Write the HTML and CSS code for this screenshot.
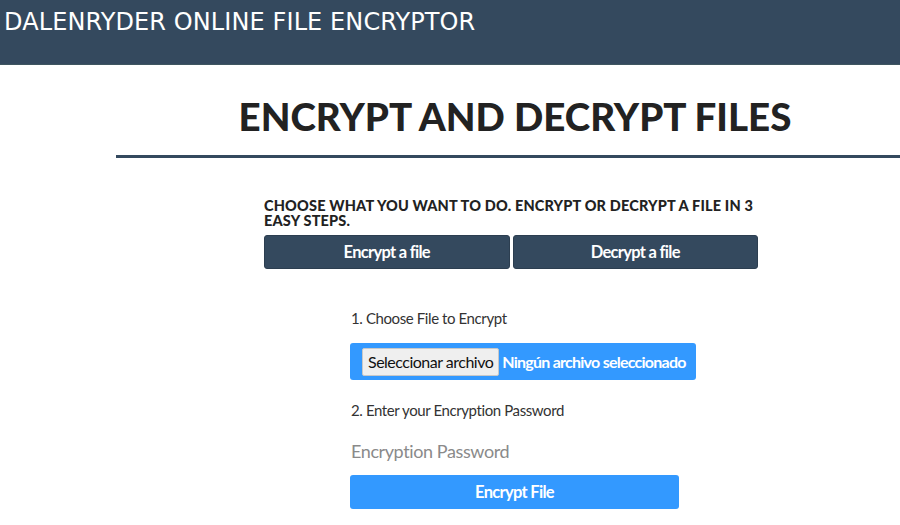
FILE: index.html
```html
<!DOCTYPE html>
<html lang="es">
<head>
<meta charset="utf-8">
<title>Dalenryder Online File Encryptor</title>
<link rel="stylesheet" href="styles.css">
</head>
<body>
<header class="topbar">
  <div class="brand">DALENRYDER ONLINE FILE ENCRYPTOR</div>
</header>
<main class="page">
  <h1 class="title">ENCRYPT AND DECRYPT FILES</h1>
  <hr class="rule">
  <section class="panel">
    <p class="lead">CHOOSE WHAT YOU WANT TO DO. ENCRYPT OR DECRYPT A FILE IN 3 EASY STEPS.</p>
    <div class="tabs">
      <button class="tab" type="button">Encrypt a file</button>
      <button class="tab" type="button">Decrypt a file</button>
    </div>
    <form class="steps">
      <label class="step-label">1. Choose File to Encrypt</label>
      <div class="filebox">
        <span class="filebtn">Seleccionar archivo</span>
        <span class="filename">Ningún archivo seleccionado</span>
      </div>
      <label class="step-label">2. Enter your Encryption Password</label>
      <input class="password" type="password" placeholder="Encryption Password">
      <button class="submit" type="button">Encrypt File</button>
    </form>
  </section>
</main>
</body>
</html>
```
FILE: styles.css
```css
html, body {
  margin: 0;
  padding: 0;
  background: #ffffff;
}
body {
  font-family: "Lato", "Liberation Sans", sans-serif;
  color: #333333;
  overflow: hidden;
}
.topbar {
  height: 65px;
  background: #34495e;
  border-bottom: 1px solid #3f5660;
  padding: 8px 0 0 4px;
  box-sizing: border-box;
}
.brand {
  font-family: "DejaVu Sans", sans-serif;
  font-size: 24px;
  line-height: 28px;
  color: #ffffff;
  letter-spacing: 0.1px;
}
.page {
  margin-left: 116px;
}
.title {
  margin: 0;
  padding: 28px 0 0 14px;
  text-align: center;
  font-family: "Lato", sans-serif;
  font-weight: 900;
  font-size: 38.5px;
  line-height: 46px;
  color: #222222;
}
.rule {
  margin: 16px 0 0 0;
  border: 0;
  height: 3px;
  background: #34495e;
}
.panel {
  margin: 40px 0 0 148px;
  width: 494px;
}
.lead {
  margin: 0;
  font-family: "Lato", sans-serif;
  font-weight: 900;
  font-size: 14.5px;
  line-height: 15px;
  letter-spacing: 0.17px;
  color: #222222;
}
.tabs {
  margin-top: 7px;
  display: grid;
  grid-template-columns: 1fr 1fr;
  gap: 3px;
}
.tab {
  height: 34px;
  background: #34495e;
  border: 1px solid #2c3e50;
  border-radius: 3px;
  color: #ffffff;
  font-family: "Lato", sans-serif;
  font-weight: 700;
  font-size: 16.5px;
  letter-spacing: -0.7px;
  padding: 0;
}
.steps {
  margin: 40px 0 0 86px;
  width: 346px;
  display: flex;
  flex-direction: column;
  align-items: flex-start;
}
.step-label {
  font-size: 15px;
  line-height: 18px;
  letter-spacing: -0.4px;
  color: #333333;
  padding-left: 1px;
}
.filebox {
  margin-top: 16px;
  width: 346px;
  height: 37px;
  box-sizing: border-box;
  background: #3399ff;
  border-radius: 3px;
  display: flex;
  align-items: center;
  padding-left: 12px;
  gap: 3px;
  white-space: nowrap;
}
.filebtn {
  background: #efefef;
  border: 1px solid #c8c8c8;
  border-radius: 2px;
  color: #111111;
  font-size: 16px;
  letter-spacing: -0.5px;
  line-height: 26px;
  padding: 0 5px 0 5px;
}
.filename {
  color: #ffffff;
  font-weight: 700;
  font-size: 16px;
  letter-spacing: -0.75px;
}
.steps .filebox + .step-label {
  margin-top: 21px;
}
.password {
  margin-top: 20px;
  width: 328px;
  border: 0;
  padding: 0 0 0 1px;
  font-family: "Lato", sans-serif;
  font-size: 18px;
  letter-spacing: -0.4px;
  line-height: 24px;
  height: 24px;
  outline: none;
  background: transparent;
}
.password::placeholder {
  color: #8a8a8a;
}
.submit {
  margin-top: 12px;
  width: 329px;
  height: 34px;
  background: #3399ff;
  border: 0;
  border-radius: 3px;
  color: #ffffff;
  font-family: "Lato", sans-serif;
  font-weight: 700;
  font-size: 16.5px;
  letter-spacing: -0.7px;
}
```
